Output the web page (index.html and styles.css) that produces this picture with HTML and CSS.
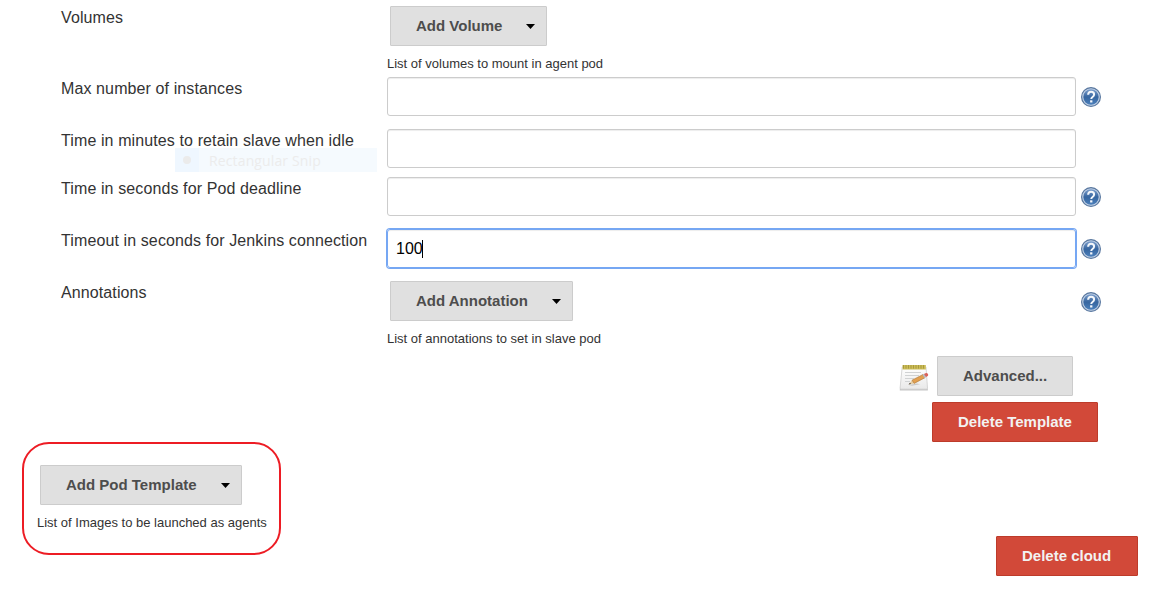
FILE: index.html
```html
<!DOCTYPE html>
<html lang="en">
<head>
<meta charset="utf-8">
<title>Pod template configuration</title>
<link rel="stylesheet" href="styles.css">
</head>
<body>
<svg class="defs" width="0" height="0" aria-hidden="true">
  <defs>
    <linearGradient id="disc" x1="0" y1="0" x2="0" y2="1">
      <stop offset="0" stop-color="#7d9fcd"/><stop offset=".5" stop-color="#36659f"/><stop offset="1" stop-color="#4a7fbb"/>
    </linearGradient>
    <linearGradient id="paper" x1="0" y1="0" x2="0" y2="1">
      <stop offset="0" stop-color="#ffffff"/><stop offset="1" stop-color="#e9e9e9"/>
    </linearGradient>
    <symbol id="help" viewBox="0 0 20 20">
      <circle cx="10" cy="10" r="9.4" fill="#c3d2e6" stroke="#58779f" stroke-width="1.2"/>
      <circle cx="10" cy="10" r="7.7" fill="url(#disc)"/>
      <path d="M7.1 7.7C7.2 5.7 8.4 4.8 10.1 4.800s3 .9 3 2.600c0 1.400-.8 2-1.600 2.600-.9.6-1.200 1-1.200 2" fill="none" stroke="#f4f7fb" stroke-width="2"/>
      <rect x="9.1" y="13.3" width="2.3" height="2.2" fill="#f4f7fb"/>
    </symbol>
  </defs>
</svg>
<main class="page">
  <div class="row row-volumes">
    <div class="label">Volumes</div>
    <div class="field">
      <button class="btn btn-menu">Add Volume<svg class="caret" viewBox="0 0 9 5"><path d="M0 0h9L4.5 5z"/></svg></button>
      <div class="hint">List of volumes to mount in agent pod</div>
    </div>
  </div>
  <div class="row row-tall">
    <div class="label">Max number of instances</div>
    <div class="field"><div class="input"></div></div>
    <svg class="help"><use href="#help"/></svg>
  </div>
  <div class="row row-idle">
    <div class="label">Time in minutes to retain slave when idle
      <div class="snip"><span class="snip-mark"><i class="snip-dot"></i></span><span class="snip-text">Rectangular Snip</span></div>
    </div>
    <div class="field"><div class="input"></div></div>
  </div>
  <div class="row row-tall">
    <div class="label">Time in seconds for Pod deadline</div>
    <div class="field"><div class="input"></div></div>
    <svg class="help"><use href="#help"/></svg>
  </div>
  <div class="row row-tall">
    <div class="label">Timeout in seconds for Jenkins connection</div>
    <div class="field"><div class="input input-focus">100<i class="cursor"></i></div></div>
    <svg class="help"><use href="#help"/></svg>
  </div>
  <div class="row row-annotations">
    <div class="label">Annotations</div>
    <div class="field">
      <button class="btn btn-menu">Add Annotation<svg class="caret" viewBox="0 0 9 5"><path d="M0 0h9L4.5 5z"/></svg></button>
      <div class="hint">List of annotations to set in slave pod</div>
    </div>
    <svg class="help help-low"><use href="#help"/></svg>
  </div>
  <div class="actions actions-advanced">
    <svg class="notepad" viewBox="0 0 30 30">
      <path d="M.8 25.500h28v2H.8z" fill="#c4c4c4"/>
      <path d="M3.200 4h23.800l1.500 21q0 1.200-1.200 1.200H2.300q-1.200 0-1.200-1.200z" fill="url(#paper)" stroke="#cdcdcd" stroke-width=".8"/>
      <path d="M3.500 2h23.300V6.500H3.500z" fill="#cdbd57"/>
      <path d="M4.500 2v3.600M7 2v3.600M9.500 2v3.600M12 2v3.600M14.500 2v3.600M17 2v3.600M19.500 2v3.600M22 2v3.600M24.500 2v3.600" stroke="#a3963d" stroke-width=".9"/>
      <path d="M6 9.500h16M6 12.500h14M6 15.500h9M6 18.500h5" stroke="#d0d2d3" stroke-width="1"/>
      <path d="M10 22l8-1.500 3 .8-8 1.500z" fill="#c8c8c8"/>
      <path d="M9.500 21.500l3.500-4.300 2.200 3.200z" fill="#e8cea0"/>
      <path d="M9.500 21.500l1.500-1.800 1 1.200z" fill="#444"/>
      <path d="M13 17.200l11-5.700 2 3.200-10.800 5.700z" fill="#e2a050" stroke="#ab7536" stroke-width=".6"/>
      <path d="M23.500 11.700l1.700-.9 2 3.200-1.700 1z" fill="#b8bcc0"/>
      <path d="M25 10.900l2-.9q1-.3 1.600.6l.5.900q.4.900-.4 1.400l-1.700 1z" fill="#d9625a"/>
    </svg>
    <button class="btn btn-advanced">Advanced...</button>
  </div>
  <div class="actions actions-template"><button class="btn btn-danger btn-template">Delete Template</button></div>
  <section class="callout">
    <button class="btn btn-menu btn-pod">Add Pod Template<svg class="caret" viewBox="0 0 9 5"><path d="M0 0h9L4.5 5z"/></svg></button>
    <div class="hint">List of Images to be launched as agents</div>
  </section>
  <div class="actions actions-cloud"><button class="btn btn-danger btn-cloud">Delete cloud</button></div>
</main>
</body>
</html>
```
FILE: styles.css
```css
* { box-sizing: border-box; }
body {
  margin: 0;
  background: #fff;
  color: #333;
  font-family: "Liberation Sans", Arial, sans-serif;
  font-size: 16px;
}
.defs { display: block; }
.page { height: 616px; padding-top: 6px; overflow: hidden; }
.row {
  display: grid;
  grid-template-columns: 326px 689px 25px;
  padding-left: 61px;
  align-items: start;
}
.row-volumes { height: 71px; }
.row-tall { height: 52px; }
.row-idle { height: 48px; }
.row-annotations { height: 75px; }
.label { position: relative; line-height: 24px; letter-spacing: .11px; white-space: nowrap; }
.help { width: 20px; height: 20px; margin: 10px 0 0 5px; }
.help-low { margin-top: 11px; }
.hint { font-size: 13px; line-height: 16px; margin-top: 10px; white-space: nowrap; }
.input {
  display: flex;
  align-items: center;
  height: 39px;
  padding: 0 8px;
  border: 1px solid #ccc;
  border-radius: 3px;
  box-shadow: inset 0 1px 1px rgba(0, 0, 0, .075);
  color: #000;
}
.input-focus { border-color: #76a7f3; box-shadow: 0 0 0 1px #76a7f3, inset 0 1px 1px rgba(0, 0, 0, .075); }
.cursor { width: 1px; height: 18px; margin-left: -1px; background: #000; }
.btn {
  display: flex;
  align-items: center;
  height: 40px;
  margin: 0;
  padding: 0 25px 2px;
  border: 1px solid #ccc;
  border-radius: 1px;
  background: #e0e0e0;
  color: #4d4d4d;
  font: bold 15px "Liberation Sans", Arial, sans-serif;
  white-space: nowrap;
}
.btn-menu { justify-content: space-between; margin-left: 3px; padding-right: 11px; }
.row-volumes .btn { width: 157px; }
.row-annotations .btn { width: 183px; }
.caret { width: 9px; height: 5px; margin-top: 2px; fill: #000; }
.btn-danger { border-color: #bd3b2a; background: #d24939; color: #f2f2f2; }
.snip {
  position: absolute;
  left: 114px;
  top: 19px;
  display: flex;
  width: 202px;
  height: 24px;
  background: #f5fafe;
  color: #ececec;
  font: 14px/26px "Open Sans", "Noto Sans", sans-serif;
  letter-spacing: .13px;
}
.snip-mark { display: flex; align-items: center; justify-content: center; width: 24px; background: #eff7ff; }
.snip-dot { width: 8px; height: 8px; border-radius: 50%; background: #ebebeb; }
.snip-text { padding-left: 10px; }
.actions { display: flex; justify-content: flex-end; }
.actions-advanced { height: 46px; padding-right: 92px; }
.notepad { width: 30px; height: 30px; margin: 7px 8px 0 0; }
.btn-advanced { width: 136px; }
.actions-template { height: 40px; padding-right: 67px; }
.btn-template { width: 166px; }
.callout {
  width: 259px;
  height: 113px;
  margin-left: 22px;
  padding: 21px 0 0 13px;
  border: 2px solid #ed1c24;
  border-radius: 27px;
}
.btn-pod { width: 202px; }
.actions-cloud { margin-top: -19px; padding-right: 27px; }
.btn-cloud { width: 142px; }
```
